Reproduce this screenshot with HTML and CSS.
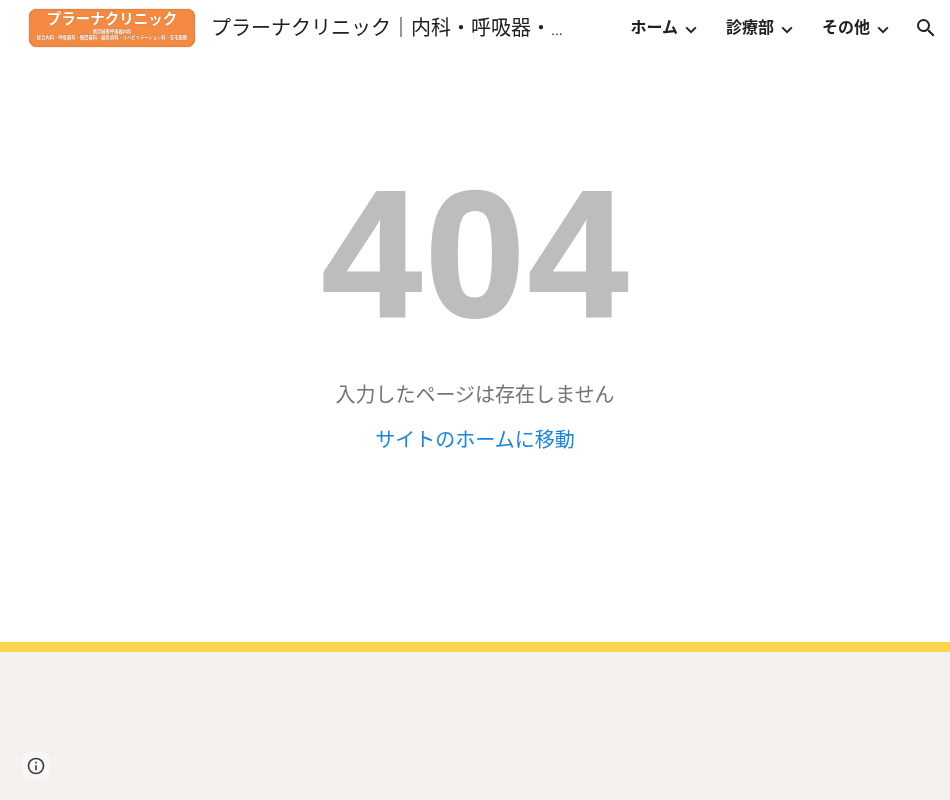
FILE: index.html
```html
<!DOCTYPE html>
<html lang="ja">
<head>
<meta charset="utf-8">
<title>プラーナクリニック</title>
<link rel="stylesheet" href="styles.css">
</head>
<body>
<header class="topbar">
  <div class="logo">
    <span class="logo-title">プラーナクリニック</span>
    <span class="logo-sub">横浜緑車呼吸器内科</span>
    <span class="logo-sub">総合内科・呼吸器科・循環器科・糖尿病科・リハビリテーション科・在宅医療</span>
  </div>
  <div class="site-name"><span class="site-text">プラーナクリニック<span class="pipe">｜</span>内科・呼吸器・</span><span class="ellipsis">...</span></div>
  <nav class="nav">
    <a class="nav-item">ホーム<svg class="chev" viewBox="0 0 12 8"><path d="M1.2 1.4 6 6.2l4.8-4.8" /></svg></a>
    <a class="nav-item">診療部<svg class="chev" viewBox="0 0 12 8"><path d="M1.2 1.4 6 6.2l4.8-4.8" /></svg></a>
    <a class="nav-item">その他<svg class="chev" viewBox="0 0 12 8"><path d="M1.2 1.4 6 6.2l4.8-4.8" /></svg></a>
  </nav>
  <svg class="search" viewBox="0 0 24 24"><path d="M15.5 14h-.79l-.28-.27A6.47 6.47 0 0 0 16 9.5 6.5 6.5 0 1 0 9.5 16c1.61 0 3.09-.59 4.23-1.57l.27.28v.79l5 4.99L20.49 19l-4.99-5zm-6 0C7.01 14 5 11.99 5 9.5S7.01 5 9.5 5 14 7.01 14 9.5 11.99 14 9.5 14z"/></svg>
</header>
<main class="main">
  <div class="code">404</div>
  <p class="message">入力したページは存在しません</p>
  <a class="home-link">サイトのホームに移動</a>
</main>
<div class="stripe"></div>
<footer class="footer">
  <div class="info-badge">
    <svg class="info" viewBox="0 0 24 24"><path d="M11 7h2v2h-2zm0 4h2v6h-2zm1-9a10 10 0 1 0 0 20 10 10 0 0 0 0-20zm0 18a8 8 0 1 1 0-16 8 8 0 0 1 0 16z"/></svg>
  </div>
</footer>
</body>
</html>
```
FILE: styles.css
```css
* { box-sizing: border-box; }
html, body { margin: 0; height: 100%; }
body {
  display: flex;
  flex-direction: column;
  height: 800px;
  overflow: hidden;
  background: #fff;
  font-family: "Liberation Sans", "Noto Sans CJK JP", sans-serif;
}
.topbar {
  display: flex;
  align-items: center;
  height: 56px;
  flex: none;
  padding-left: 29px;
  padding-right: 12px;
  will-change: transform;
}
.logo {
  display: flex;
  flex-direction: column;
  align-items: center;
  width: 166px;
  height: 38px;
  border-radius: 8px;
  background: #f58a42;
  box-shadow: inset 0 0 2px #b5703f, 0 0 1px #a8693c;
  color: #fff;
  overflow: hidden;
}
.logo-title {
  font-size: 14.5px;
  font-weight: 700;
  line-height: 20px;
  white-space: nowrap;
  text-shadow: 0 0 1px rgba(120, 60, 20, .6);
}
.logo-sub {
  font-size: 4.3px;
  font-weight: 700;
  line-height: 6px;
  white-space: nowrap;
  text-shadow: 0 0 1px rgba(120, 60, 20, .8);
}
.logo-sub:first-of-type { margin-top: 3px; }
.site-name {
  margin-left: 16px;
  margin-top: 1px;
  width: 360px;
  color: #212121;
  font-size: 20px;
  white-space: nowrap;
  line-height: 28px;
}
.pipe { font-weight: 700; }
.ellipsis { font-size: 14px; }
.nav {
  display: flex;
  gap: 29px;
  margin-left: auto;
  margin-right: 25px;
}
.nav-item {
  display: flex;
  align-items: center;
  gap: 7px;
  color: #212121;
  font-size: 16px;
  font-weight: 700;
  line-height: 24px;
}
.chev {
  width: 12px;
  height: 8px;
  margin-top: 3px;
  fill: none;
  stroke: #212121;
  stroke-width: 2;
}
.search { width: 24px; height: 24px; fill: #212121; }
.main {
  flex: 1;
  display: flex;
  flex-direction: column;
  align-items: center;
  will-change: transform;
}
.code {
  margin-top: 94px;
  padding-left: 3px;
  color: #bdbdbd;
  font-size: 180px;
  font-weight: 700;
  letter-spacing: 3px;
  -webkit-text-stroke: 2px #bdbdbd;
  line-height: 208px;
}
.message {
  margin: 23px 0 0;
  color: #757575;
  font-size: 20px;
  line-height: 28px;
}
.home-link {
  margin-top: 17px;
  color: #1a85e0;
  font-size: 20px;
  line-height: 28px;
}
.stripe { flex: none; height: 10px; background: #ffd54f; }
.footer {
  flex: none;
  display: flex;
  align-items: flex-end;
  height: 148px;
  padding: 0 0 20px 22px;
  background: #f5f1ee;
}
.info-badge {
  display: flex;
  align-items: center;
  justify-content: center;
  width: 28px;
  height: 28px;
  border-radius: 9px;
  background: #f9f7f5;
}
.info { width: 20px; height: 20px; fill: #3c4043; }
```
